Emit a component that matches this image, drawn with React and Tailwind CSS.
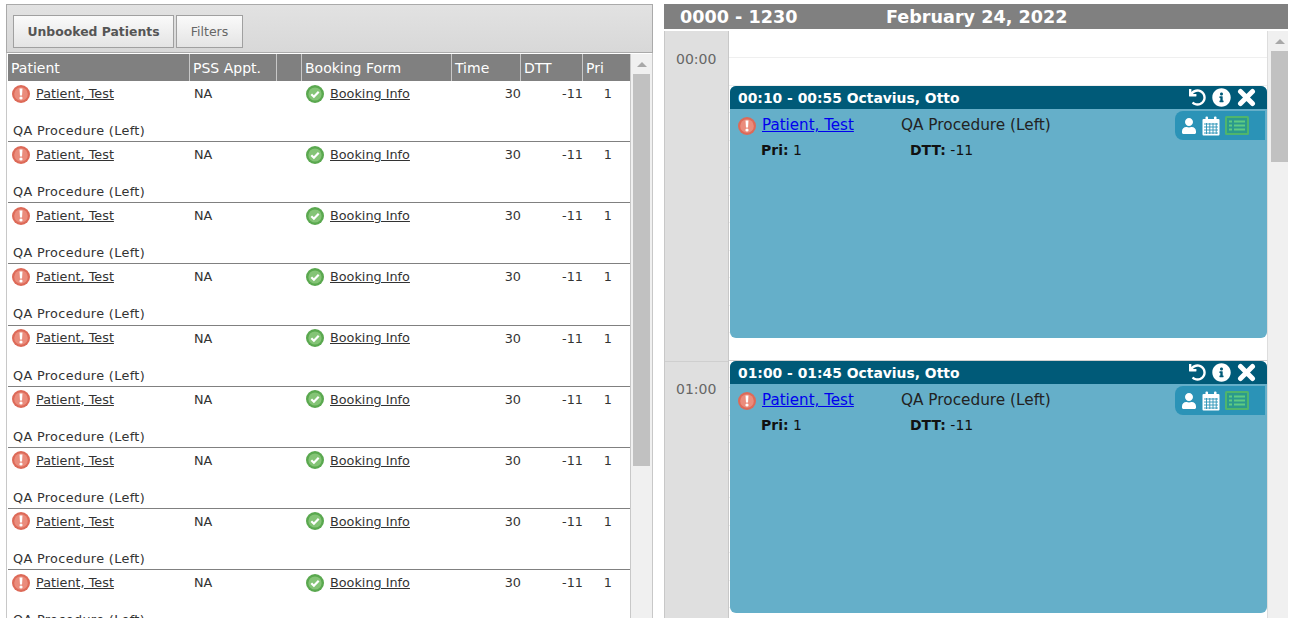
import React from "react";
import { FaUndo, FaInfoCircle, FaUser } from "react-icons/fa";

const FONT = "font-['DejaVu_Sans','Liberation_Sans',sans-serif]";
const COLS = "grid grid-cols-[182px_87px_25px_150px_69px_62px_47px]";

const AlertIcon = () => (
  <svg width="18" height="18" viewBox="0 0 18 18" className="shrink-0">
    <circle cx="9" cy="9" r="9" fill="#dd6a58" />
    <circle cx="9" cy="9" r="6.8" fill="#ea8c7c" />
    <path d="M7.500 3.500h3L10 10.500H8z" fill="#fff" />
    <circle cx="9" cy="13" r="1.600" fill="#fff" />
  </svg>
);

const CheckIcon = () => (
  <svg width="18" height="18" viewBox="0 0 18 18" className="shrink-0">
    <circle cx="9" cy="9" r="9" fill="#5aa84f" />
    <circle cx="9" cy="9" r="6.600" fill="#84c476" />
    <path d="M5.300 9.200l2.600 2.600 4.800-5" fill="none" stroke="#fff" strokeWidth="2.200" />
  </svg>
);

// thick close cross, FaTimes is too thin against the reference
const CloseIcon = () => (
  <svg width="19" height="19" viewBox="0 0 19 19">
    <path d="M3.500 3.500l12 12M15.500 3.500l-12 12" stroke="#fff" strokeWidth="5" strokeLinecap="round" />
  </svg>
);

const GridCalendarIcon = () => (
  <svg width="18" height="20" viewBox="0 0 18 20">
    <rect x="0.500" y="3" width="17" height="16.500" rx="1" fill="#fff" />
    <rect x="3.500" y="0.500" width="2.500" height="4.500" rx="1" fill="#fff" />
    <rect x="12" y="0.500" width="2.500" height="4.500" rx="1" fill="#fff" />
    <path d="M2 8h14M2 11h14M2 14h14M2 17h14M4.500 7v11M7.800 7v11M11 7v11M14.200 7v11" stroke="#2b93b7" strokeWidth="0.900" />
  </svg>
);

const ListIcon = () => (
  <svg width="24" height="19" viewBox="0 0 24 19">
    <rect width="24" height="19" rx="1.500" fill="#4fb56c" />
    <rect x="2" y="2" width="20" height="15" fill="#2b9a8c" />
    <path d="M4 5.500h3M9 5.500h11M4 9.500h3M9 9.500h11M4 13.500h3M9 13.500h11" stroke="#5fcb82" strokeWidth="2" />
  </svg>
);

const headers = ["Patient", "PSS Appt.", "", "Booking Form", "Time", "DTT", "Pri"];

const PatientRow = () => (
  <div className="h-[61.14px] border-b border-[#808080] text-[12.8px] text-[#333]">
    <div className={`${COLS} h-[40px]`}>
      <div className="flex items-center gap-[6px] pl-1 pt-[1px] h-[24px]">
        <AlertIcon />
        <a className="underline">Patient, Test</a>
      </div>
      <div className="pl-1 pt-[3px]">NA</div>
      <div />
      <div className="flex items-center gap-[6px] pl-1 pt-[1px] h-[24px]">
        <CheckIcon />
        <a className="underline">Booking Info</a>
      </div>
      <div className="text-right pt-[3px]">30</div>
      <div className="text-right pt-[3px]">-11</div>
      <div className="text-right pr-[18px] pt-[3px]">1</div>
    </div>
    <div className="pl-[5px] tracking-[0.35px]">QA Procedure (Left)</div>
  </div>
);

const ScrollArrow = () => (
  <div className="h-[20px] flex items-center justify-center">
    <div className="w-0 h-0 border-l-[5px] border-r-[5px] border-b-[5px] border-l-transparent border-r-transparent border-b-[#a8a8a8]" />
  </div>
);

const Event = ({ top, title }) => (
  <div className="absolute left-[1px] w-[537px] h-[252px] rounded-[6px] bg-[#65afc9] overflow-hidden" style={{ top }}>
    <div className="h-[23px] bg-[#005a78] flex items-center justify-between pl-[8px] pr-[11px] text-white font-bold text-[13.9px]">
      <span className="pt-[1px]">{title}</span>
      <div className="flex items-center gap-[6px]">
        <FaUndo className="text-[17px]" />
        <FaInfoCircle className="text-[19px]" />
        <CloseIcon />
      </div>
    </div>
    <div className="flex items-start justify-between pl-[8px] pt-[2px] pr-[2px]">
      <div className="flex flex-col">
        <div className="flex items-center h-[29px]">
          <AlertIcon />
          <a className="underline text-[#0000ee] text-[15.100px] ml-[6px] w-[139px]">Patient, Test</a>
          <span className="text-[15.300px] text-[#222]">QA Procedure (Left)</span>
        </div>
        <div className="flex text-[14px] text-[#111] pl-[23px] h-[20px] items-center">
          <span className="w-[149px]"><b>Pri:</b> 1</span>
          <span><b>DTT:</b> -11</span>
        </div>
      </div>
      <div className="w-[90px] h-[29px] bg-[#2b93b7] rounded-l-[8px] flex items-center pl-[6px] gap-[5px] text-white">
        <FaUser className="text-[16px]" />
        <GridCalendarIcon />
        <ListIcon />
      </div>
    </div>
  </div>
);

const App = () => {
  const rows = Array.from({ length: 9 });
  const slots = Array.from({ length: 11 });

  return (
    <div className={`${FONT} h-[618px] w-[1296px] overflow-hidden bg-white flex pt-1 pl-[6px]`}>
      {/* unbooked patients list */}
      <div className="w-[647px] shrink-0 h-[614px] border-l border-[#c8c8c8] border-r">
        <div className="h-[49px] -ml-[1px] -mr-[1px] border border-[#aaaaaa] bg-gradient-to-b from-[#e2e2e2] to-[#d8d8d8] flex items-start pl-[6px] pt-[10px] gap-[2px]">
          <button className="w-[161px] h-[33px] border border-[#a0a0a0] bg-gradient-to-b from-[#fafafa] to-[#e4e4e4] font-bold text-[12.400px] text-[#555] pt-[1px]">
            Unbooked Patients
          </button>
          <button className="w-[67px] h-[33px] border border-[#a0a0a0] bg-gradient-to-b from-[#fafafa] to-[#e4e4e4] text-[12.500px] text-[#666] pt-[2px]">
            Filters
          </button>
        </div>
        <div className="flex pl-[1px] pt-[1px]">
          <div className="w-[622px] shrink-0">
            <div className={`${COLS} h-[27px] bg-[#808080] text-white text-[14px]`}>
              {headers.map((h, i) => (
                <div key={i} className={`flex items-center pl-[3px] pt-[1px] ${i < 6 ? "border-r border-[#c8c8c8]" : ""}`}>{h}</div>
              ))}
            </div>
            {rows.map((_, i) => <PatientRow key={i} />)}
          </div>
          <div className="w-[23px] h-[600px] bg-[#f0f0f0] border-l border-[#c8c8c8] px-[2px]">
            <ScrollArrow />
            <div className="h-[392px] bg-[#c1c1c1]" />
          </div>
        </div>
      </div>

      {/* schedule */}
      <div className="ml-[11px] w-[624px] shrink-0">
        <div className="h-[25px] bg-[#808080] text-white font-bold text-[17.600px] flex items-center pl-[16px] pt-[1px]">
          <span className="w-[206px]">0000 - 1230</span>
          <span>February 24, 2022</span>
        </div>
        <div className="flex mt-[2px] h-[587px] overflow-hidden">
          <div className="w-[65px] shrink-0 bg-[#dfdfdf] border-l border-r border-[#c8c8c8] text-[14px] text-[#666]">
            <div className="h-[330px] pt-[18px] pl-[11px]">00:00</div>
            <div className="border-t border-[#cfcfcf] pt-[17px] pl-[11px]">01:00</div>
          </div>
          <div className="relative w-[539px] shrink-0 border-r border-[#dddddd]">
            {slots.map((_, i) => (
              <div key={i} className={`h-[55px] border-b ${i === 5 ? "border-[#d0d0d0]" : "border-[#efefef]"}`}>
                <div className="h-[27px] border-b border-[#efefef]" />
              </div>
            ))}
            <Event top={55} title="00:10 - 00:55 Octavius, Otto" />
            <Event top={330} title="01:00 - 01:45 Octavius, Otto" />
          </div>
          <div className="w-[20px] shrink-0 bg-[#f0f0f0] pl-[3px]">
            <ScrollArrow />
            <div className="h-[111px] bg-[#c1c1c1]" />
          </div>
        </div>
      </div>
    </div>
  );
};

export default App;
